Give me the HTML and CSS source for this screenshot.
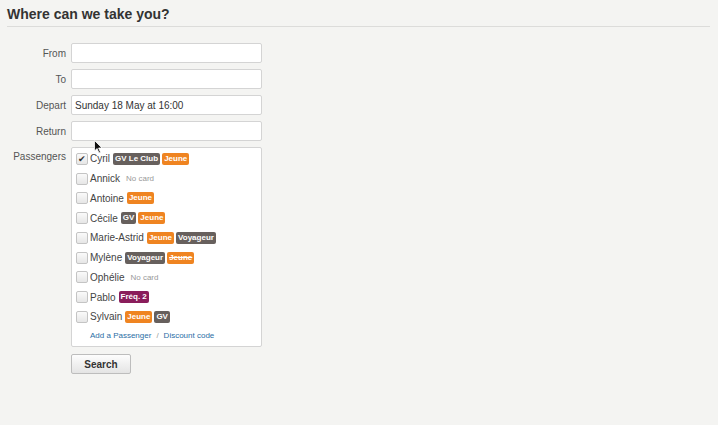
FILE: index.html
```html
<!DOCTYPE html>
<html>
<head>
<meta charset="utf-8">
<link rel="stylesheet" href="styles.css">
</head>
<body>
<div class="page">
  <h1 class="title">Where can we take you?</h1>
  <form class="form">
    <div class="row"><label class="lbl">From</label><input class="field" type="text"></div>
    <div class="row"><label class="lbl">To</label><input class="field" type="text"></div>
    <div class="row"><label class="lbl">Depart</label><input class="field" type="text" value="Sunday 18 May at 16:00"></div>
    <div class="row"><label class="lbl">Return</label><input class="field" type="text"></div>
    <div class="row prow"><label class="lbl plbl">Passengers</label>
      <div class="pbox">
        <div class="pax"><span class="cb checked">✔</span><span class="name">Cyril</span><span class="tag gray">GV Le Club</span><span class="tag orange">Jeune</span></div>
        <div class="pax"><span class="cb"></span><span class="name">Annick</span><span class="nocard">No card</span></div>
        <div class="pax"><span class="cb"></span><span class="name">Antoine</span><span class="tag orange">Jeune</span></div>
        <div class="pax"><span class="cb"></span><span class="name">Cécile</span><span class="tag gray">GV</span><span class="tag orange">Jeune</span></div>
        <div class="pax"><span class="cb"></span><span class="name">Marie-Astrid</span><span class="tag orange">Jeune</span><span class="tag gray">Voyageur</span></div>
        <div class="pax"><span class="cb"></span><span class="name">Mylène</span><span class="tag gray">Voyageur</span><span class="tag orange strike">Jeune</span></div>
        <div class="pax"><span class="cb"></span><span class="name">Ophélie</span><span class="nocard">No card</span></div>
        <div class="pax"><span class="cb"></span><span class="name">Pablo</span><span class="tag purple">Fréq. 2</span></div>
        <div class="pax"><span class="cb"></span><span class="name">Sylvain</span><span class="tag orange">Jeune</span><span class="tag gray">GV</span></div>
        <div class="links"><a class="lnk">Add a Passenger</a><span class="sep">/</span><a class="lnk">Discount code</a></div>
      </div>
    </div>
    <div class="row"><span class="lbl"></span><button class="btn" type="button">Search</button></div>
  </form>
</div>
<svg class="cursor" width="10" height="14" viewBox="0 0 10 14"><path d="M0.5 0.5 L0.5 11 L3 8.5 L5 13 L6.5 12.3 L4.6 8 L8 8 Z" fill="#111" stroke="#fff" stroke-width="0.8"/></svg>
</body>
</html>
```
FILE: styles.css
```css
html, body { margin: 0; padding: 0; }
body {
  background: #f4f4f2;
  font-family: "Liberation Sans", Arial, sans-serif;
  color: #333;
  width: 718px;
  height: 425px;
  overflow: hidden;
  position: relative;
}
.page { padding: 0 8px 0 7px; }
.title {
  margin: 0;
  padding: 8px 0 5px 0;
  font-size: 14px;
  font-weight: bold;
  color: #333;
  border-bottom: 1px solid #dcdcda;
  line-height: 13px;
}
.form { padding-top: 16px; }
.row { display: flex; align-items: center; margin-bottom: 6px; }
.lbl {
  width: 59px;
  text-align: right;
  padding-right: 5px;
  font-size: 10px;
  color: #555;
  flex: none;
}
.field {
  width: 191px;
  height: 20px;
  box-sizing: border-box;
  border: 1px solid #d4d4d4;
  border-radius: 2px;
  background: #fff;
  margin: 0;
  padding: 0 3px;
  font-family: "Liberation Sans", Arial, sans-serif;
  font-size: 10px;
  color: #333;
  outline: none;
}
.prow { align-items: flex-start; margin-top: 2px; margin-bottom: 7px; }
.plbl { padding-top: 4px; }
.pbox {
  width: 191px;
  box-sizing: border-box;
  height: 200px;
  border: 1px solid #d4d4d4;
  border-radius: 2px;
  background: #fff;
  padding: 1px 0 0 4px;
}
.pax { display: flex; align-items: center; height: 19.75px; }
.cb {
  width: 10px;
  height: 10px;
  border: 1px solid #c4c4c4;
  border-radius: 2px;
  background: linear-gradient(#fafafa, #e6e6e6);
  margin-right: 2px;
  flex: none;
  font-size: 9px;
  line-height: 10px;
  text-align: center;
  color: #333;
}
.name { font-size: 10px; color: #444; margin-right: 3px; }
.tag {
  display: inline-block;
  font-size: 8px;
  font-weight: bold;
  color: #fff;
  padding: 0 2px;
  height: 12px;
  line-height: 12px;
  border-radius: 2px;
  margin-right: 2px;
}
.gray { background: #67605d; }
.orange { background: #ef8421; }
.purple { background: #8a1d5b; }
.strike { text-decoration: line-through; }
.nocard { font-size: 8px; color: #999; margin-left: 3px; }
.links { padding-left: 14px; height: 18px; display: flex; align-items: center; font-size: 8px; }
.lnk { color: #2b6ea5; }
.sep { color: #999; margin: 0 5px; }
.btn {
  width: 60px;
  height: 20px;
  border: 1px solid #bdbdbd;
  border-radius: 2px;
  background: linear-gradient(#fdfdfd, #e4e4e4);
  font-family: "Liberation Sans", Arial, sans-serif;
  font-size: 10px;
  font-weight: bold;
  color: #333;
  padding: 0;
  margin: 0;
}
.cursor { position: absolute; left: 94px; top: 140px; }
```
